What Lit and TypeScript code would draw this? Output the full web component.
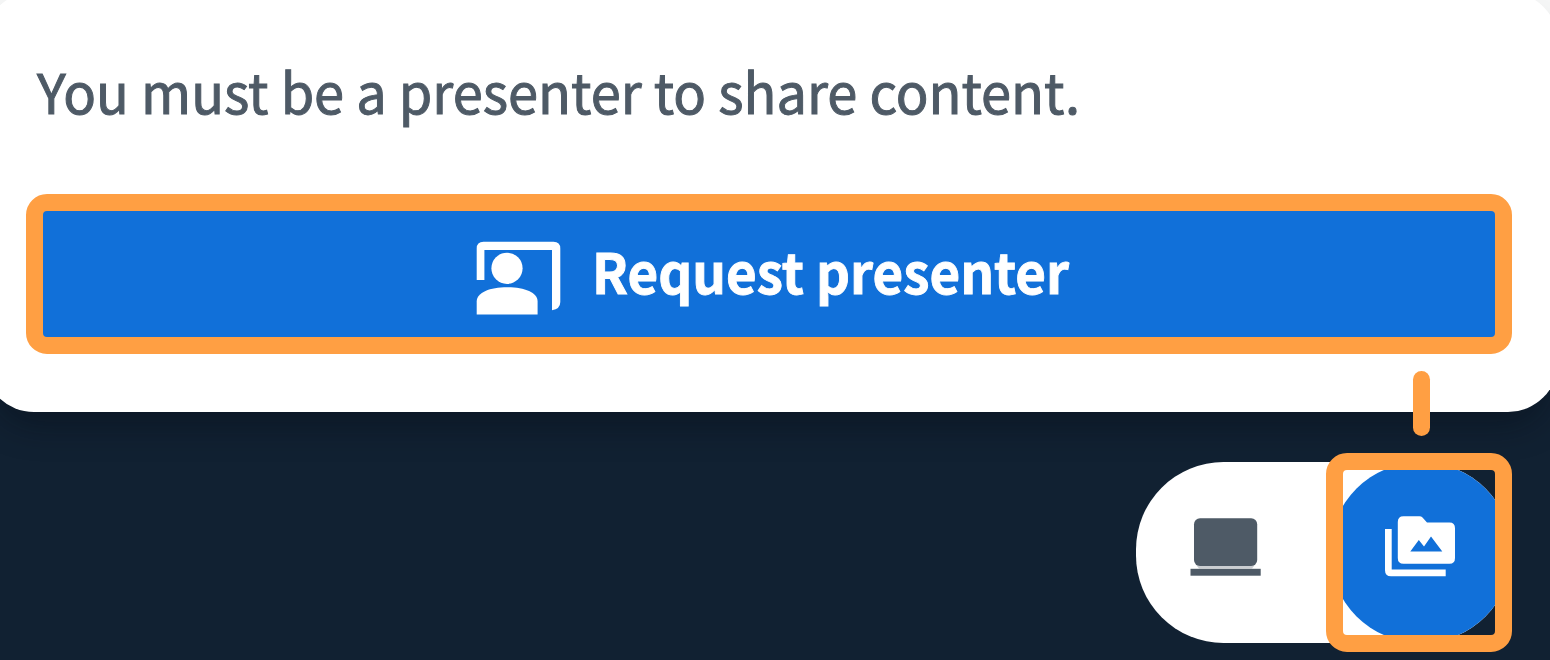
import { LitElement, html, css } from "lit";
import { customElement } from "lit/decorators.js";

@customElement("app-root")
export class AppRoot extends LitElement {
  static styles = css`
    :host {
      display: flex;
      flex-direction: column;
      position: relative;
      box-sizing: border-box;
      width: 1550px;
      height: 660px;
      overflow: hidden;
      background: linear-gradient(#f5f6f6 0 30px, #112132 30px);
      font-family: "Noto Sans CJK SC", "Noto Sans", sans-serif;
    }
    .card {
      flex: none;
      box-sizing: border-box;
      height: 420px;
      margin: -8px -8px 0 -16px;
      padding: 58px 46px 0 42px;
      border-radius: 50px;
      background: #fff;
      box-shadow: 0 24px 36px -14px rgba(5, 8, 18, 0.45);
    }
    .message {
      height: 80px;
      margin: 0 0 64px 10.5px;
      line-height: 80px;
      font-size: 55px;
      color: #4e5a66;
      white-space: nowrap;
      transform: scaleX(0.984);
      transform-origin: left;
      -webkit-text-stroke: 1px #4e5a66;
    }
    .request {
      display: flex;
      align-items: center;
      box-sizing: border-box;
      width: 1486px;
      height: 160px;
      padding: 0 0 0 433px;
      border: 17px solid #ff9f43;
      border-radius: 21px;
      background: #1170d9;
      color: #fff;
      font: inherit;
      font-size: 55px;
      font-weight: 700;
      white-space: nowrap;
    }
    .request svg {
      flex: none;
      margin-top: 8px;
    }
    .label {
      margin: -8px 0 0 30px;
      line-height: 80px;
      transform: scaleX(0.962);
      transform-origin: left;
      -webkit-text-stroke: 0.9px #fff;
    }
    .toolbar {
      display: flex;
      justify-content: flex-end;
      padding: 49.5px 38px 0 0;
    }
    .pill {
      display: flex;
      justify-content: space-between;
      width: 376px;
      height: 181.5px;
      border-radius: 88px 91px 91px 88px;
      background: #fff;
    }
    .tool {
      display: grid;
      place-items: center;
      box-sizing: border-box;
      padding: 0 0 11px;
      border: 0;
      background: none;
    }
    .screen {
      width: 179px;
    }
    .media {
      position: relative;
      width: 182px;
      border-radius: 50%;
      background: #1170d9;
    }
    .frame {
      position: absolute;
      inset: -8.5px 0 -8.5px -4px;
      border: 17px solid #ff9f43;
      border-radius: 21px;
    }
    .connector {
      position: absolute;
      left: 1413px;
      top: 371px;
      width: 17px;
      height: 65px;
      border-radius: 9px;
      background: #ff9f43;
    }
    svg {
      display: block;
    }
  `;

  render() {
    return html`
      <section class="card">
        <p class="message">You must be a presenter to share content.</p>
        <button class="request">
          <svg width="86" height="75" viewBox="476 241 86 75" fill="#fff">
            <path d="M476.7 280V248.5Q476.7 241.7 483.5 241.7H553.5Q560.3 241.7 560.3 248.5V302Q560.3 309 552 310.3V250H484.4V280Z" />
            <circle cx="507" cy="268.3" r="15.6" />
            <path d="M476.7 314.5V301.5C476.7 292.5 490 287.3 507.1 287.3S537.6 292.5 537.6 301.5V314.5Z" />
          </svg>
          <span class="label">Request presenter</span>
        </button>
      </section>
      <div class="toolbar">
        <div class="pill">
          <button class="tool screen">
            <svg width="72" height="60" viewBox="1190 517.2 72 60" fill="#4e5a66">
              <path d="M1196 565H1255L1252 568.6H1199Z" opacity=".3" />
              <rect x="1194" y="518.4" width="63.2" height="47.7" rx="6" />
              <rect x="1190.5" y="569" width="70.2" height="6.9" />
            </svg>
          </button>
          <button class="tool media">
            <svg width="72" height="62" viewBox="1385 515.3 72 62" fill="#fff">
              <path d="M1385 528.3H1391.7V568.7H1445.7V575.6H1391Q1385 575.6 1385 569.5Z" />
              <path fill-rule="evenodd" d="M1403.5 515.6H1419.5Q1421.3 515.6 1422.5 516.9L1427 521.8H1449.5Q1455 521.8 1455 527.5V557.2Q1455 563 1449.5 563H1403.5Q1397.8 563 1397.8 557.2V521.2Q1397.8 515.6 1403.5 515.6ZM1410.3 550.8H1442.3L1431 535.8L1424 545.8L1418.8 539.3Z" />
            </svg>
            <span class="frame"></span>
          </button>
        </div>
      </div>
      <div class="connector"></div>
    `;
  }
}
